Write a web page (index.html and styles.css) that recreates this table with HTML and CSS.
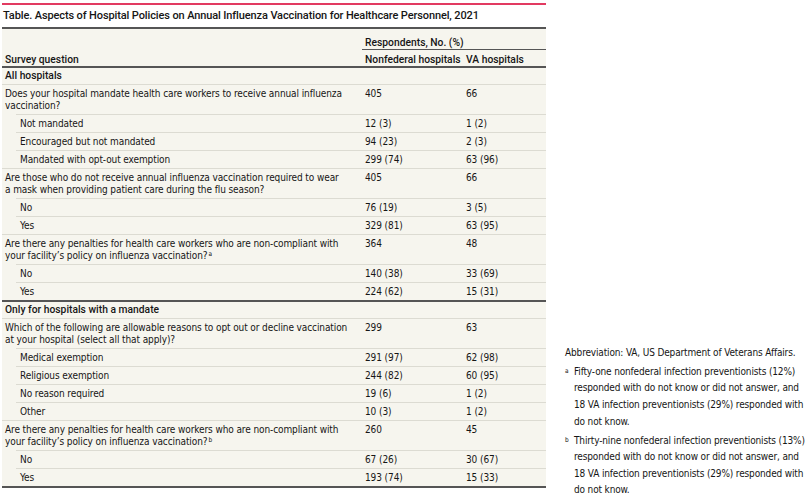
FILE: index.html
```html
<!DOCTYPE html>
<html lang="en">
<head>
<meta charset="utf-8">
<title>Table</title>
<link rel="stylesheet" href="styles.css">
</head>
<body>
<div class="page">
  <div class="tablebox">
    <div class="caption">Table. Aspects of Hospital Policies on Annual Influenza Vaccination for Healthcare Personnel, 2021</div>
    <table class="data">
      <colgroup><col class="c1"><col class="c2"><col class="c3"></colgroup>
      <thead>
        <tr class="h1">
          <th rowspan="2" class="sq">Survey question</th>
          <th colspan="2" class="resp">Respondents, No. (%)</th>
        </tr>
        <tr class="h2">
          <th>Nonfederal hospitals</th>
          <th>VA hospitals</th>
        </tr>
      </thead>
      <tbody>
        <tr class="sec"><td colspan="3">All hospitals</td></tr>
        <tr class="q"><td>Does your hospital mandate health care workers to receive annual influenza vaccination?</td><td>405</td><td>66</td></tr>
        <tr class="s"><td>Not mandated</td><td>12 (3)</td><td>1 (2)</td></tr>
        <tr class="s"><td>Encouraged but not mandated</td><td>94 (23)</td><td>2 (3)</td></tr>
        <tr class="s"><td>Mandated with opt-out exemption</td><td>299 (74)</td><td>63 (96)</td></tr>
        <tr class="q"><td>Are those who do not receive annual influenza vaccination required to wear a&nbsp;mask when providing patient care during the flu season?</td><td>405</td><td>66</td></tr>
        <tr class="s"><td>No</td><td>76 (19)</td><td>3 (5)</td></tr>
        <tr class="s"><td>Yes</td><td>329 (81)</td><td>63 (95)</td></tr>
        <tr class="q"><td>Are there any penalties for health care workers who are non-compliant with your facility’s policy on influenza vaccination?<sup>a</sup></td><td>364</td><td>48</td></tr>
        <tr class="s"><td>No</td><td>140 (38)</td><td>33 (69)</td></tr>
        <tr class="s"><td>Yes</td><td>224 (62)</td><td>15 (31)</td></tr>
        <tr class="sec dark"><td colspan="3">Only for hospitals with a mandate</td></tr>
        <tr class="q"><td>Which of the following are allowable reasons to opt out or decline vaccination at your hospital (select all that apply)?</td><td>299</td><td>63</td></tr>
        <tr class="s"><td>Medical exemption</td><td>291 (97)</td><td>62 (98)</td></tr>
        <tr class="s"><td>Religious exemption</td><td>244 (82)</td><td>60 (95)</td></tr>
        <tr class="s"><td>No reason required</td><td>19 (6)</td><td>1 (2)</td></tr>
        <tr class="s"><td>Other</td><td>10 (3)</td><td>1 (2)</td></tr>
        <tr class="q"><td>Are there any penalties for health care workers who are non-compliant with your facility’s policy on influenza vaccination?<sup>b</sup></td><td>260</td><td>45</td></tr>
        <tr class="s"><td>No</td><td>67 (26)</td><td>30 (67)</td></tr>
        <tr class="s last"><td>Yes</td><td>193 (74)</td><td>15 (33)</td></tr>
      </tbody>
    </table>
  </div>
  <div class="notes">
    <p class="abbr">Abbreviation: VA, US Department of Veterans Affairs.</p>
    <p class="fn"><sup>a</sup>Fifty-one nonfederal infection preventionists (12%) responded with do not know or did not answer, and 18 VA infection preventionists (29%) responded with do not know.</p>
    <p class="fn"><sup>b</sup>Thirty-nine nonfederal infection preventionists (13%) responded with do not know or did not answer, and 18 VA infection preventionists (29%) responded with do not know.</p>
  </div>
</div>
</body>
</html>
```
FILE: styles.css
```css
html, body {
  margin: 0;
  padding: 0;
  background: #ffffff;
}
body {
  font-family: "DejaVu Sans Condensed", "DejaVu Sans", sans-serif;
  color: #161616;
}
.page {
  display: flex;
  align-items: flex-start;
  gap: 19px;
  padding: 3px 0 0 2px;
}
.tablebox {
  width: 544px;
  flex: none;
  border-top: 2px solid #e23a61;
}
.caption {
  font-family: Roboto, "Liberation Sans", sans-serif;
  font-size: 11px;
  font-weight: 500;
  line-height: 13px;
  letter-spacing: -0.12px;
  padding: 4px 1px 5px;
  border-bottom: 2px solid #555555;
  white-space: nowrap;
}
.data {
  width: 100%;
  border-collapse: separate;
  border-spacing: 0;
  background: #f6f5ee;
  font-size: 10px;
  line-height: 12px;
  letter-spacing: -0.1px;
  table-layout: fixed;
}
.c1 { width: 360px; }
.c2 { width: 101px; }
.c3 { width: auto; }
th, td {
  text-align: left;
  vertical-align: top;
  padding: 3.5px 2px 1.5px 3px;
}
td:first-child { padding-right: 9px; }
th, tr.sec td {
  font-family: Roboto, "Liberation Sans", sans-serif;
  font-weight: 500;
  font-size: 10.3px;
  letter-spacing: 0;
  white-space: nowrap;
}
.h1 th { padding-top: 7.5px; padding-bottom: 0; }
.h1 th.resp { border-bottom: 1px solid #555555; }
.h1 th.sq { vertical-align: bottom; padding-bottom: 0; }
.h2 th { padding-top: 4px; padding-bottom: 0; }
thead tr:last-child th, .h1 th.sq { border-bottom: 2px solid #555555; }
tbody td { border-top: 1px solid #dcdbd2; }
tbody tr:first-child td { border-top: none; }
tr.sec td { padding-top: 2.5px; padding-bottom: 1.5px; }
tr.dark td { border-top: 2px solid #555555; }
tr.s td:first-child {
  padding-left: 18px;
  border-top-color: transparent;
  background: linear-gradient(#dcdbd2, #dcdbd2) no-repeat;
  background-origin: border-box;
  background-position: 14px 0;
  background-size: calc(100% - 14px) 1px;
}
tr.last td { border-bottom: 2px solid #555555; }
sup {
  font-size: 6.5px;
  line-height: 0;
  vertical-align: 3px;
  margin-left: 1px;
}
.notes {
  width: 245px;
  margin-top: 342px;
  font-size: 10px;
  line-height: 16.6px;
  letter-spacing: -0.15px;
}
.notes p { margin: 0 0 2.3px; }
.notes .fn {
  padding-left: 9px;
  position: relative;
}
.notes .fn sup {
  position: absolute;
  left: 0;
  top: 7px;
  margin: 0;
  font-size: 6.5px;
}
```
